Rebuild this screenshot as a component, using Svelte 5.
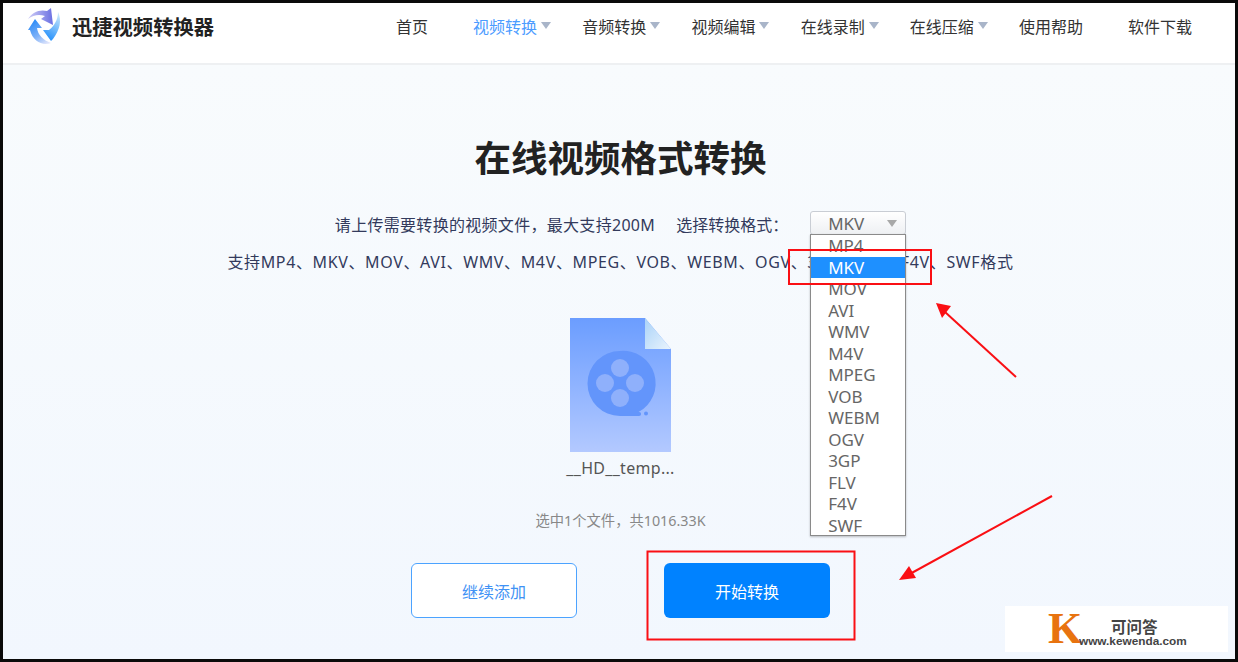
<script>
  const nav = [
    { label: '首页' },
    { label: '视频转换', caret: true, active: true },
    { label: '音频转换', caret: true },
    { label: '视频编辑', caret: true },
    { label: '在线录制', caret: true },
    { label: '在线压缩', caret: true },
    { label: '使用帮助' },
    { label: '软件下载' }
  ];
  const formats = ['MP4', 'MKV', 'MOV', 'AVI', 'WMV', 'M4V', 'MPEG', 'VOB', 'WEBM', 'OGV', '3GP', 'FLV', 'F4V', 'SWF'];
</script>

<div class="frame">
  <header class="header">
    <div class="brand">
      <svg class="logo" width="36" height="37" viewBox="0 0 36 37" aria-hidden="true">
        <defs>
          <linearGradient id="lg1" x1="0" y1="0" x2="1" y2="0"><stop offset="0" stop-color="#cfcdf6"/><stop offset="1" stop-color="#6a6fe2"/></linearGradient>
          <linearGradient id="lg2" x1="0.7" y1="0" x2="0.3" y2="1"><stop offset="0" stop-color="#c6e6fb"/><stop offset="1" stop-color="#1f8dfb"/></linearGradient>
          <linearGradient id="lg3" x1="0.2" y1="0" x2="0.8" y2="1"><stop offset="0" stop-color="#2488f7"/><stop offset="0.6" stop-color="#7fb2f8"/><stop offset="1" stop-color="#dfe4fb"/></linearGradient>
        </defs>
        <path fill="url(#lg1)" d="M1 11C5 4 13 1 20 3L24 0 26 17 14 11 18 8C12 6 6 7 1 11z"/>
        <path fill="url(#lg2)" d="M31 4C35 12 33 22 26 31L24 33 16 22H22C27 18 31 12 31 4z"/>
        <path fill="url(#lg3)" d="M8 11L15 20H10C11 27 16 32 24 35 16 38 6 34 3 22H1z"/>
      </svg>
      <span class="brand-name">迅捷视频转换器</span>
    </div>
    <nav class="nav">
      {#each nav as item}
        <span class="nav-item" class:with-caret={item.caret} class:active={item.active}>
          {item.label}{#if item.caret}<i class="caret"></i>{/if}
        </span>
      {/each}
    </nav>
  </header>

  <main class="main">
    <h1 class="title">在线视频格式转换</h1>

    <div class="row-upload">
      <span class="upload-hint">请上传需要转换的视频文件，最大支持200M</span>
      <span class="format-label">选择转换格式：</span>
      <div class="select-wrap">
        <div class="select"><span>MKV</span><i class="select-caret"></i></div>
        <ul class="dropdown">
          {#each formats as f}
            <li class:selected={f === 'MKV'}>{f}</li>
          {/each}
        </ul>
      </div>
    </div>

    <p class="support">支持MP4、MKV、MOV、AVI、WMV、M4V、MPEG、VOB、WEBM、OGV、3GP、FLV、F4V、SWF格式</p>

    <svg class="file-icon" width="102" height="135" viewBox="0 0 102 135" aria-hidden="true">
      <defs>
        <linearGradient id="fileBg" x1="0" y1="0" x2="0" y2="1"><stop offset="0" stop-color="#6b9dff"/><stop offset="1" stop-color="#b3c9ff"/></linearGradient>
        <linearGradient id="fold" x1="0" y1="0" x2="1" y2="1"><stop offset="0" stop-color="#a9d2f8"/><stop offset="1" stop-color="#eaf4fd"/></linearGradient>
      </defs>
      <path fill="url(#fileBg)" d="M0 0H75L101 31V134H0z"/>
      <path fill="url(#fold)" d="M75 0L101 31H75z"/>
      <path fill="#6395fb" d="M50 33a32.500 32.500 0 1 0 0 65H69c1.500 0 2-.8 2-2s-.5-2-2-2h-.500A32.500 32.500 0 0 0 50 33z"/>
      <circle cx="76" cy="95.500" r="2" fill="#6395fb"/>
      <g fill="#8fb0fb">
        <circle cx="50" cy="50" r="9"/>
        <circle cx="50" cy="80" r="9"/>
        <circle cx="35" cy="65" r="9"/>
        <circle cx="65" cy="65" r="9"/>
      </g>
    </svg>
    <div class="file-name">__HD__temp...</div>
    <div class="summary">选中1个文件，共1016.33K</div>

    <div class="actions">
      <button class="btn outline">继续添加</button>
      <button class="btn primary">开始转换</button>
    </div>
  </main>

  <svg class="annotations" width="1238" height="662" viewBox="0 0 1238 662" aria-hidden="true">
    <rect x="789" y="250" width="142" height="34" fill="none" stroke="#fa0f14" stroke-width="2"/>
    <rect x="647.500" y="551.500" width="207" height="88" fill="none" stroke="#fa0f14" stroke-width="2"/>
    <line x1="1016" y1="377" x2="945" y2="312" stroke="#fa0f14" stroke-width="2"/>
    <path d="M936 303L951 306 942 318z" fill="#fa0f14"/>
    <line x1="1052" y1="496" x2="908" y2="575" stroke="#fa0f14" stroke-width="2"/>
    <path d="M899 580L909 566 916 578z" fill="#fa0f14"/>
  </svg>

  <div class="watermark">
    <span class="wm-k">K</span>
    <div class="wm-text">
      <span class="wm-cn">可问答</span>
      <span class="wm-url">www.kewenda.com</span>
    </div>
  </div>
</div>

<style>
  :global(body) {
    margin: 0;
    background: #000;
  }
  .frame {
    position: relative;
    box-sizing: border-box;
    width: 1238px;
    height: 662px;
    border: 3px solid #0a0a0a;
    overflow: hidden;
    display: flex;
    flex-direction: column;
    font-family: "Noto Sans", "Noto Sans CJK SC", sans-serif;
    color: #333;
  }
  .header {
    flex: none;
    box-sizing: border-box;
    height: 62px;
    background: #fff;
    border-bottom: 2px solid #eef0f2;
    display: flex;
    align-items: center;
    padding-left: 24px;
  }
  .brand {
    flex: none;
    display: flex;
    align-items: center;
    gap: 9px;
    width: 369px;
    margin-top: -13px;
  }
  .logo {
    flex: none;
  }
  .brand-name {
    font-size: 20.300px;
    font-weight: 700;
    color: #222;
    line-height: 36px;
  }
  .nav {
    flex: none;
    display: flex;
    margin-top: -13px;
  }
  .nav-item {
    padding-right: 45px;
    font-size: 16px;
    color: #333;
    line-height: 24px;
    white-space: nowrap;
  }
  .nav-item.with-caret {
    padding-right: 31.200px;
  }
  .nav-item.active {
    color: #4c9cff;
  }
  .caret {
    display: inline-block;
    margin-left: 4px;
    width: 0;
    height: 0;
    border-left: 5.500px solid transparent;
    border-right: 5.500px solid transparent;
    border-top: 7px solid #a9b5c9;
    vertical-align: 4px;
  }
  .main {
    flex: 1;
    display: flex;
    flex-direction: column;
    align-items: center;
    padding-left: 3px;
    background: linear-gradient(180deg, #f8fbfd 0%, #f2f7fe 100%);
  }
  .title {
    margin: 66px 0 0;
    font-size: 36.500px;
    font-weight: 700;
    line-height: 54px;
    color: #222;
  }
  .row-upload {
    margin-top: 26px;
    display: flex;
    align-items: center;
    height: 26px;
    font-size: 16px;
    color: #333a5c;
    white-space: nowrap;
  }
  .upload-hint {
    letter-spacing: 0.3px;
  }
  .format-label {
    margin-left: 21px;
    margin-right: 22px;
  }
  .select-wrap {
    position: relative;
    align-self: flex-start;
    width: 96px;
    height: 24px;
  }
  .select {
    box-sizing: border-box;
    height: 24px;
    border: 1px solid #c9cdd4;
    border-radius: 3px;
    background: linear-gradient(180deg, #fff, #eef0f3);
    display: flex;
    align-items: center;
    justify-content: space-between;
    padding: 0 8px 0 17px;
    font-size: 17px;
    color: #666;
  }
  .select-caret {
    width: 0;
    height: 0;
    border-left: 5px solid transparent;
    border-right: 5px solid transparent;
    border-top: 7px solid #a8a8a8;
  }
  .dropdown {
    position: absolute;
    z-index: 2;
    top: 23px;
    left: 0;
    box-sizing: border-box;
    width: 96px;
    height: 302px;
    margin: 0;
    padding: 0;
    list-style: none;
    background: #fff;
    border: 1px solid #8a8a8a;
    box-shadow: 0 1px 2px rgba(0, 0, 0, 0.25);
    overflow: hidden;
  }
  .dropdown li {
    height: 21.500px;
    line-height: 21.500px;
    padding-left: 17px;
    font-size: 17px;
    color: #666;
  }
  .dropdown li.selected {
    background: #1e90ff;
    color: #fff;
  }
  .support {
    margin: 12px 0 0;
    font-size: 16px;
    letter-spacing: 0.63px;
    line-height: 26px;
    color: #333a5c;
    white-space: nowrap;
  }
  .file-icon {
    margin-top: 43px;
    flex: none;
  }
  .file-name {
    margin-top: 3px;
    font-size: 16px;
    letter-spacing: 0.3px;
    line-height: 24px;
    color: #555;
  }
  .summary {
    margin-top: 31px;
    font-size: 14.300px;
    line-height: 20px;
    color: #888;
  }
  .actions {
    margin-top: 32px;
    display: flex;
    gap: 87px;
  }
  .btn {
    box-sizing: border-box;
    width: 166px;
    height: 55px;
    border-radius: 6px;
    font: inherit;
    font-size: 16px;
    padding: 0;
  }
  .outline {
    background: #fff;
    border: 1px solid #4ca3ff;
    color: #3f92f5;
  }
  .primary {
    background: #0082ff;
    border: none;
    color: #fff;
  }
  .annotations {
    position: absolute;
    left: -3px;
    top: -3px;
    z-index: 3;
    pointer-events: none;
  }
  .watermark {
    position: absolute;
    z-index: 4;
    left: 1002px;
    top: 603px;
    width: 223px;
    height: 46px;
    background: #fff;
    display: flex;
    align-items: center;
    padding-left: 43px;
    box-sizing: border-box;
  }
  .wm-k {
    font-family: "Liberation Serif", serif;
    font-weight: 700;
    font-size: 44px;
    line-height: 46px;
    color: #e8730f;
    width: 31px;
  }
  .wm-text {
    display: flex;
    flex-direction: column;
    align-items: center;
    margin-top: 5px;
  }
  .wm-cn {
    margin-left: 3px;
    font-family: "Noto Sans CJK SC", sans-serif;
    font-size: 15.500px;
    font-weight: 700;
    line-height: 18px;
    color: #444;
  }
  .wm-url {
    font-family: "Liberation Sans", sans-serif;
    font-size: 11.800px;
    font-weight: 700;
    line-height: 12px;
    color: #444;
  }
</style>
